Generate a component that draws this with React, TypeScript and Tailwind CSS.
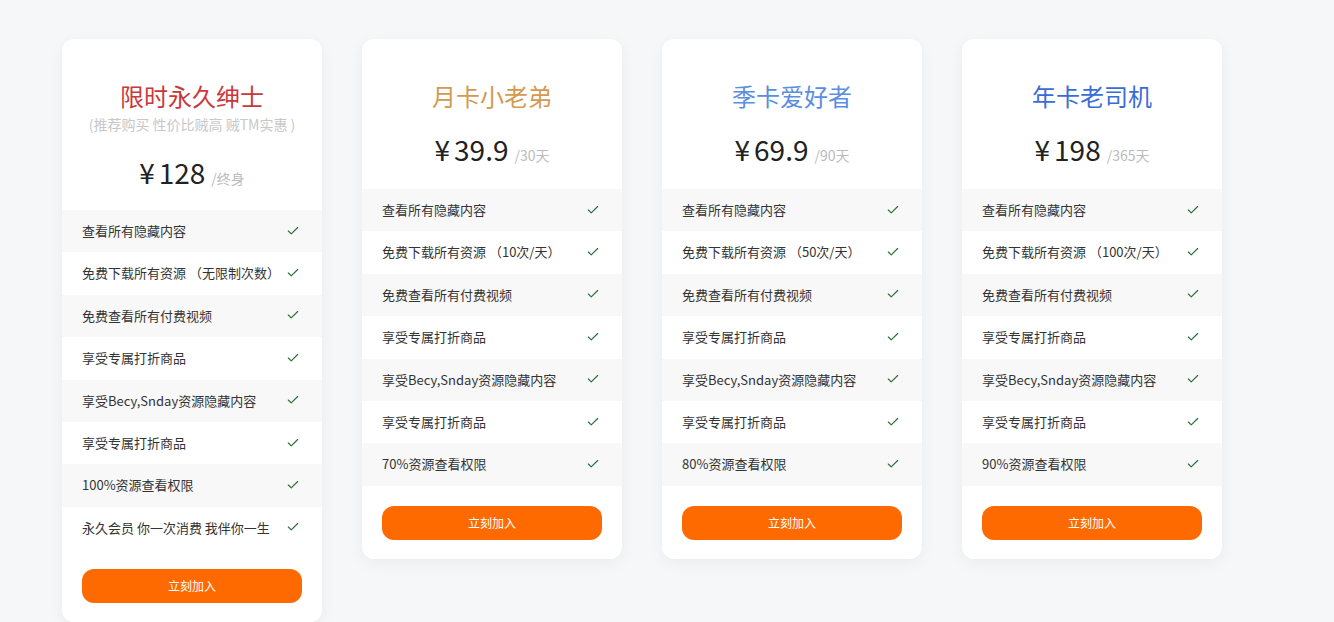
import React from "react";
import { Check } from "lucide-react";

type Plan = {
    title: string;
    titleColor: string;
    subtitle?: string;
    price: string;
    unit: string;
    features: string[];
};

const plans: Plan[] = [
    {
        title: "限时永久绅士",
        titleColor: "text-[#c9393b]",
        subtitle: "(推荐购买 性价比贼高 贼TM实惠 )",
        price: "128",
        unit: "/终身",
        features: [
            "查看所有隐藏内容",
            "免费下载所有资源 （无限制次数）",
            "免费查看所有付费视频",
            "享受专属打折商品",
            "享受Becy,Snday资源隐藏内容",
            "享受专属打折商品",
            "100%资源查看权限",
            "永久会员 你一次消费 我伴你一生",
        ],
    },
    {
        title: "月卡小老弟",
        titleColor: "text-[#d39a4f]",
        price: "39.9",
        unit: "/30天",
        features: [
            "查看所有隐藏内容",
            "免费下载所有资源 （10次/天）",
            "免费查看所有付费视频",
            "享受专属打折商品",
            "享受Becy,Snday资源隐藏内容",
            "享受专属打折商品",
            "70%资源查看权限",
        ],
    },
    {
        title: "季卡爱好者",
        titleColor: "text-[#5a8ee0]",
        price: "69.9",
        unit: "/90天",
        features: [
            "查看所有隐藏内容",
            "免费下载所有资源 （50次/天）",
            "免费查看所有付费视频",
            "享受专属打折商品",
            "享受Becy,Snday资源隐藏内容",
            "享受专属打折商品",
            "80%资源查看权限",
        ],
    },
    {
        title: "年卡老司机",
        titleColor: "text-[#3a6cd8]",
        price: "198",
        unit: "/365天",
        features: [
            "查看所有隐藏内容",
            "免费下载所有资源 （100次/天）",
            "免费查看所有付费视频",
            "享受专属打折商品",
            "享受Becy,Snday资源隐藏内容",
            "享受专属打折商品",
            "90%资源查看权限",
        ],
    },
];

function PlanCard({ plan }: { plan: Plan }) {
    return (
        <div className="w-[260px] shrink-0 bg-white rounded-xl shadow-[0_4px_16px_rgba(0,0,0,0.05)] overflow-hidden pb-[19px]">
            {/* Header */}
            <div className={`flex flex-col items-center pt-[41px] ${plan.subtitle ? "pb-[18px]" : "pb-5"}`}>
                <h3 className={`text-[24px] leading-8 ${plan.titleColor}`}>{plan.title}</h3>
                {plan.subtitle && (
                    <p className="text-[14px] leading-5 text-[#c8c8c8] mt-[2px]">{plan.subtitle}</p>
                )}
                <div className={`flex items-baseline h-10 ${plan.subtitle ? "mt-[18px]" : "mt-[17px]"}`}>
                    <span className="text-[28px] text-[#222] leading-10">¥</span>
                    <span className="text-[28px] text-[#222] leading-10 ml-1">{plan.price}</span>
                    <span className="text-[14px] text-[#bbb] ml-1.5">{plan.unit}</span>
                </div>
            </div>

            {/* Features */}
            <ul>
                {plan.features.map((f, i) => (
                    <li
                        key={i}
                        className={`h-[42.4px] flex items-center justify-between px-5 text-[13px] text-[#333] ${
                            i % 2 === 0 ? "bg-[#f8f8f9]" : "bg-white"
                        }`}
                    >
                        <span className="-mt-px">{f}</span>
                        <Check className="w-[14px] h-[14px] text-[#2a6e38] mr-[2px] -mt-px" strokeWidth={2} />
                    </li>
                ))}
            </ul>

            <div className="px-5 mt-5">
                <button className="w-full h-[34px] rounded-xl bg-[#ff6a00] text-white text-[12px]">
                    立刻加入
                </button>
            </div>
        </div>
    );
}

export default function App() {
    return (
        <div
            className="min-h-screen bg-[#f6f7f9] pt-[39px] pl-[62px] flex items-start gap-10"
            style={{ fontFamily: '"Microsoft YaHei", "Noto Sans CJK SC", "Noto Sans", sans-serif' }}
        >
            {plans.map((p) => (
                <PlanCard key={p.title} plan={p} />
            ))}
        </div>
    );
}
